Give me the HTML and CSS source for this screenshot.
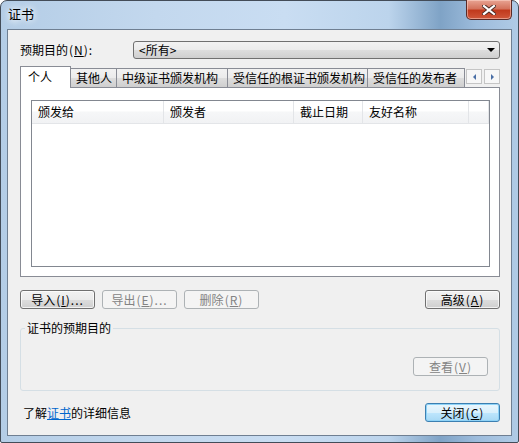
FILE: index.html
```html
<!DOCTYPE html>
<html lang="zh-CN">
<head>
    <meta charset="UTF-8">
    <title>证书</title>
    <link rel="stylesheet" href="styles.css">
</head>
<body>
    <div class="window">
        <div class="titlebar">
            <span class="title">证书</span>
            <div class="close-btn">
                <svg width="14" height="10" viewBox="0 0 14 10">
                    <path d="M2 1 L12 9 M12 1 L2 9" stroke="#4a2a24" stroke-width="4" stroke-linecap="square"/>
                    <path d="M2 1 L12 9 M12 1 L2 9" stroke="#fff" stroke-width="2.2" stroke-linecap="square"/>
                </svg>
            </div>
        </div>
        <div class="client">
            <div class="purpose-row">
                <span class="purpose-label">预期目的<span class="acc">(<u>N</u>):</span></span>
                <div class="combo">
                    <span>&lt;所有&gt;</span>
                    <span class="combo-arrow"></span>
                </div>
            </div>

            <div class="tabs">
                <div class="tab active w1">个人</div>
                <div class="tab w2">其他人</div>
                <div class="tab w3">中级证书颁发机构</div>
                <div class="tab w4">受信任的根证书颁发机构</div>
                <div class="tab w5">受信任的发布者</div>
                <div class="tab-scroll">
                    <span class="scroll-btn"><span class="tri left"></span></span>
                    <span class="scroll-btn"><span class="tri right"></span></span>
                </div>
            </div>
            <div class="tab-panel">
                <div class="listview">
                    <div class="lv-header">
                        <div class="col col-to">颁发给</div>
                        <div class="col col-by">颁发者</div>
                        <div class="col col-date">截止日期</div>
                        <div class="col col-name">友好名称</div>
                        <div class="col col-rest"></div>
                    </div>
                </div>
            </div>

            <div class="button-row">
                <div class="btn">导入<span class="acc">(<u>I</u>)...</span></div>
                <div class="btn disabled">导出<span class="acc">(<u>E</u>)...</span></div>
                <div class="btn disabled">删除<span class="acc">(<u>R</u>)</span></div>
                <div class="spacer"></div>
                <div class="btn">高级<span class="acc">(<u>A</u>)</span></div>
            </div>

            <fieldset class="groupbox">
                <legend>证书的预期目的</legend>
                <div class="group-actions">
                    <div class="btn disabled">查看<span class="acc">(<u>V</u>)</span></div>
                </div>
            </fieldset>

            <div class="footer-row">
                <span class="info">了解<a href="#">证书</a>的详细信息</span>
                <div class="btn default">关闭<span class="acc">(<u>C</u>)</span></div>
            </div>
        </div>
    </div>
</body>
</html>
```

FILE: styles.css
```css
html, body {
    margin: 0;
    padding: 0;
}
body {
    width: 519px;
    height: 443px;
    font-family: "Noto Sans CJK SC", "DejaVu Sans", sans-serif;
    font-size: 12px;
    color: #000;
    background: #fff;
}
u {
    text-decoration: underline;
}
.acc {
    margin-left: 1px;
    letter-spacing: 1px;
}
.window {
    position: relative;
    box-sizing: border-box;
    width: 519px;
    height: 443px;
    border: 1px solid #434c58;
    border-radius: 7px 7px 2px 2px;
    padding: 0 6px 6px 6px;
    display: flex;
    flex-direction: column;
    background: linear-gradient(90deg, #b4cde6 0%, #c3d8ee 30%, #c9ddf2 55%, #bcd4ec 75%, #7fa3c6 85%, #9dbcdc 92%, #b0cbe6 100%);
}
.titlebar {
    height: 28px;
    display: flex;
    align-items: center;
    flex-shrink: 0;
}
.title {
    margin-left: 1px;
    margin-top: -4px;
    font-size: 13px;
    color: #000;
    text-shadow: 0 0 6px #fff, 0 0 8px #fff;
}
.close-btn {
    position: absolute;
    top: -1px;
    right: 6px;
    width: 46px;
    height: 20px;
    box-sizing: border-box;
    border: 1px solid #5a2a26;
    border-top: none;
    border-radius: 0 0 5px 5px;
    background: linear-gradient(#e8a493 0%, #d4735d 45%, #c13a1d 55%, #d0573a 100%);
    box-shadow: inset 0 0 0 1px rgba(255, 220, 210, 0.5);
    display: flex;
    align-items: center;
    justify-content: center;
}
.client {
    flex: 1;
    border: 1px solid #6f7f92;
    background: #f0f0f0;
    padding: 11px 11px 0 12px;
    display: flex;
    flex-direction: column;
}

/* top row */
.purpose-row {
    display: flex;
    align-items: center;
    height: 18px;
}
.purpose-label {
    width: 113px;
    line-height: 18px;
}
.combo {
    flex: 1;
    height: 18px;
    box-sizing: border-box;
    border: 1px solid #707070;
    border-radius: 3px;
    background: linear-gradient(#f2f2f2 0%, #ebebeb 50%, #dddddd 51%, #cfcfcf 100%);
    display: flex;
    align-items: center;
    justify-content: space-between;
    padding: 0 4px 0 5px;
    line-height: 16px;
}
.combo-arrow {
    width: 0;
    height: 0;
    border-left: 4px solid transparent;
    border-right: 4px solid transparent;
    border-top: 4px solid #000;
}

/* tabs */
.tabs {
    display: flex;
    align-items: flex-end;
    height: 20px;
    margin-top: 8px;
    position: relative;
    z-index: 1;
}
.tab {
    height: 19px;
    box-sizing: border-box;
    border: 1px solid #898c95;
    border-bottom: none;
    padding-left: 5px;
    line-height: 18px;
    white-space: nowrap;
    background: linear-gradient(#f2f2f2 0%, #ebebeb 50%, #dddddd 51%, #cfcfcf 100%);
}
.tab + .tab {
    border-left: none;
}
.tab.active {
    height: 22px;
    margin-bottom: -1px;
    padding-left: 7px;
    line-height: 20px;
    background: #fff;
}
.w1 { width: 51px; }
.w2 { width: 46px; }
.w3 { width: 111px; }
.w4 { width: 140px; }
.w5 { width: 97px; }
.tab-scroll {
    display: flex;
    margin-left: auto;
    margin-bottom: 3px;
    gap: 2px;
}
.scroll-btn {
    width: 16px;
    height: 15px;
    box-sizing: border-box;
    border: 1px solid #c5c5c5;
    background: #f7f7f7;
    display: flex;
    align-items: center;
    justify-content: center;
}
.tri {
    width: 0;
    height: 0;
    border-top: 3px solid transparent;
    border-bottom: 3px solid transparent;
}
.tri.left {
    border-right: 3px solid #4a6fa6;
}
.tri.right {
    border-left: 3px solid #4a6fa6;
}
.tab-panel {
    height: 190px;
    box-sizing: border-box;
    border: 1px solid #898c95;
    background: #fff;
    padding: 12px 9px 9px 10px;
    display: flex;
}
.listview {
    flex: 1;
    border: 1px solid #828790;
    background: #fff;
}
.lv-header {
    display: flex;
    height: 22px;
    background: linear-gradient(#ffffff 0%, #ffffff 45%, #f6f7f8 50%, #f1f2f4 100%);
    border-bottom: 1px solid #e3e5e8;
}
.col {
    box-sizing: border-box;
    border-right: 1px solid #e3e5e8;
    padding-left: 6px;
    line-height: 22px;
}
.col-to { width: 132px; }
.col-by { width: 130px; }
.col-date { width: 69px; }
.col-name { width: 106px; }
.col-rest { width: 20px; }

/* buttons */
.button-row {
    display: flex;
    margin-top: 13px;
    gap: 7px;
}
.spacer {
    flex: 1;
}
.btn {
    width: 75px;
    height: 19px;
    box-sizing: border-box;
    border: 1px solid #707070;
    border-radius: 3px;
    background: linear-gradient(#f2f2f2 0%, #ebebeb 50%, #dddddd 51%, #cfcfcf 100%);
    box-shadow: inset 0 0 0 1px rgba(255, 255, 255, 0.7);
    text-align: center;
    line-height: 17px;
    white-space: nowrap;
}
.btn.disabled {
    border-color: #adb2b5;
    background: #f4f4f4;
    box-shadow: none;
    color: #838383;
}
.btn.default {
    border-color: #3c7fb1;
    box-shadow: inset 0 0 0 1px #8fd3f7;
    background: linear-gradient(#eaf6fd 0%, #d9f0fc 50%, #bee6fd 51%, #a7d9f5 100%);
}

/* group */
.groupbox {
    margin: 12px 0 0 0;
    height: 70px;
    box-sizing: border-box;
    border: 1px solid #d5dfe5;
    border-radius: 3px;
    padding: 0 11px 0 0;
}
.groupbox legend {
    padding: 0 2px;
    margin-left: 4px;
    line-height: 14px;
}
.group-actions {
    margin-top: 22px;
    display: flex;
    justify-content: flex-end;
}

/* footer */
.footer-row {
    display: flex;
    align-items: center;
    justify-content: space-between;
    margin-top: 12px;
}
.info {
    padding-left: 3px;
}
.info a {
    color: #0066cc;
    text-decoration: underline;
}
```
